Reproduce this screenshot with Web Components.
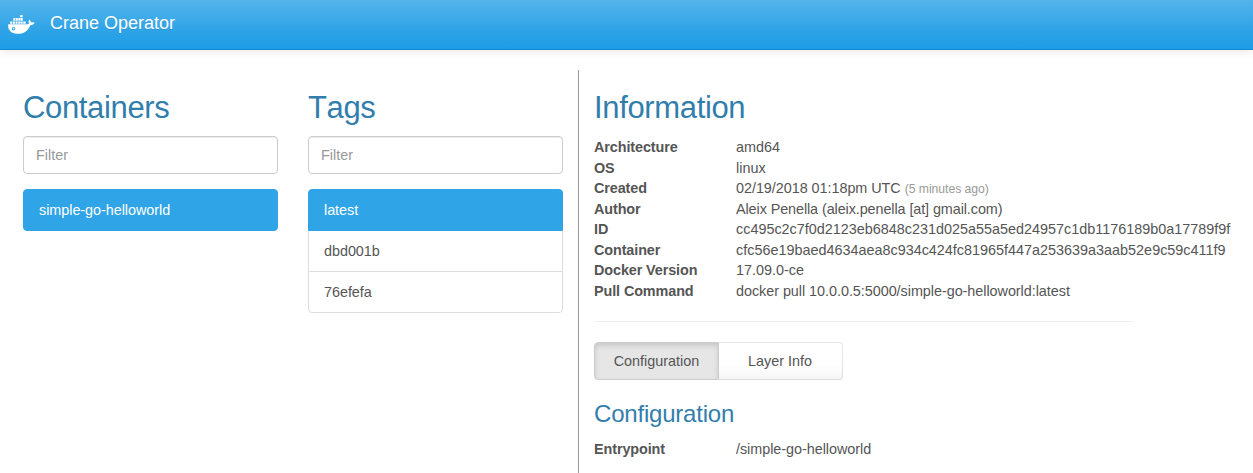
<!DOCTYPE html>
<html lang="en">
<head>
<meta charset="utf-8">
<title>Crane Operator</title>
<style>
html,body{margin:0;background:#fff;overflow:hidden}
body{font:14.4px/20.57px "Liberation Sans",Arial,sans-serif;color:#555;height:473px}
</style>
</head>
<body>
<crane-app></crane-app>
<script>
function define(name, html, setup) {
  const t = document.createElement('template');
  t.innerHTML = html;
  customElements.define(name, class extends HTMLElement {
    constructor() {
      super();
      this.attachShadow({mode: 'open'}).append(t.content.cloneNode(true));
    }
    connectedCallback() { if (setup) setup(this, this.shadowRoot); }
  });
}

define('docker-logo', `
<style>:host{display:block;width:28px;height:20px;margin-top:2px}svg{display:block}</style>
<svg width="28" height="20" viewBox="0 0 28 20" fill="#fff">
  <path d="M12.2 0h2.4v2.3h-2.4zM5.3 3.1h2v2.7h-2zM7.8 3.1h2v2.7h-2zM10.3 3.1h1.6v2.7h-1.6zM12.3 3.1h2.4v2.7h-2.4zM2.2 6.4h2.2v2.4h-2.2zM5 6.4h2v2.4H5zM7.6 6.4h2v2.4h-2zM10.2 6.4h1.8v2.4h-1.8zM12.5 6.4h2.1v2.4h-2.1zM15.2 6.4h2.5v2.4h-2.5z"/>
  <path fill-rule="evenodd" d="M.2 9.3h18.4c1.3 0 2.2-.4 2.6-.8-.9-1.2-.8-2.7.1-3.7 1.1.8 1.7 1.6 1.8 2.6 1.3-.3 2.6-.1 3.6.4-.7 1.7-2.3 2.4-4.4 2.4-2.1 5.3-5.9 8.6-11.9 8.600C3.700 18.800-.4 15.800.2 9.300zM5.600 12a1.700 1.700 0 1 0 .01 0z"/>
  <circle cx="5.7" cy="13.6" r=".8"/>
</svg>`);

define('nav-bar', `
<style>
:host{display:flex;align-items:center;box-sizing:border-box;height:50px;padding:0 8px 2px;background:linear-gradient(#54b4eb,#2fa4e7 60%,#1d9ce5);border-bottom:1px solid #178acc;box-shadow:0 1px 10px rgba(0,0,0,.1);color:#fff;font-size:18px;text-shadow:0 1px 0 rgba(0,0,0,.1)}
docker-logo{margin-right:14px}
</style><docker-logo></docker-logo><span><slot></slot></span>`);

define('section-title', `
<style>:host{display:block;color:#317eac;font-size:31px;line-height:34px;letter-spacing:-.35px;font-kerning:none;margin:21px 0 11px}:host([small]){font-size:24px;line-height:26px;letter-spacing:-.2px;margin:21px 0 12px}</style><slot></slot>`);

define('filter-box', `
<style>input{display:block;box-sizing:border-box;width:100%;height:38px;margin:0 0 15px;padding:8px 12px;border:1px solid #ccc;border-radius:4px;box-shadow:inset 0 1px 1px rgba(0,0,0,.075);font:inherit;color:#555;outline:0}input::placeholder{color:#999;opacity:1}:host{display:block}</style>
<input type="text" placeholder="Filter">`);

define('list-item', `
<style>:host{display:block;box-sizing:border-box;height:42px;padding:10px 15px;border:1px solid #ddd;margin-bottom:-1px;background:#fff;letter-spacing:-.04px}
:host(:first-of-type){border-radius:4px 4px 0 0}:host(:last-of-type){border-radius:0 0 4px 4px;margin:0}:host(:only-of-type){border-radius:4px}
:host([active]){background:#2fa4e7;border-color:#2fa4e7;color:#fff;position:relative}</style><slot></slot>`);

define('list-column', `
<style>:host{display:block;box-sizing:border-box;width:285px;padding:0 15px}</style>
<section-title></section-title><filter-box></filter-box><slot></slot>`,
(el, root) => root.querySelector('section-title').textContent = el.getAttribute('heading'));

define('info-row', `
<style>:host{display:grid;grid-template-columns:142px 1fr;height:20.57px;white-space:nowrap}b{font-weight:700;letter-spacing:-.1px}:host([snug]) span{letter-spacing:-.09px}:host([prose]) span{letter-spacing:-.04px}::slotted(small){font-size:12.2px;line-height:1;color:#999}</style>
<b></b><span><slot></slot></span>`,
(el, root) => root.querySelector('b').textContent = el.getAttribute('label'));

define('tab-group', `
<style>:host{display:flex;margin:20px 0 0}
button{box-sizing:border-box;width:125px;height:38px;padding:0;font:inherit;color:#555;border:1px solid rgba(0,0,0,.1);background:linear-gradient(#fff,#fff 60%,#f5f5f5) border-box}
button:first-of-type{border-radius:4px 0 0 4px;background:#e6e6e6;border-color:#ccc;box-shadow:inset 0 3px 5px rgba(0,0,0,.125)}
button:last-of-type{border-radius:0 4px 4px 0;border-left:0;width:124px;padding-right:1px}</style>
<button>Configuration</button><button>Layer Info</button>`);

define('info-panel', `
<style>:host{display:block;box-sizing:border-box;flex:1;min-width:0;padding:0 0 0 15px;border-left:1px solid #999}
dl{margin:0;padding-top:1px;height:164px}
hr{border:0;border-top:1px solid #eee;margin:20px 0 0;width:539px}</style>
<section-title>Information</section-title>
<dl>
<info-row label="Architecture">amd64</info-row>
<info-row label="OS">linux</info-row>
<info-row label="Created" prose>02/19/2018 01:18pm UTC <small>(5 minutes ago)</small></info-row>
<info-row label="Author" snug>Aleix Penella (aleix.penella [at] gmail.com)</info-row>
<info-row label="ID">cc495c2c7f0d2123eb6848c231d025a55a5ed24957c1db1176189b0a17789f9f</info-row>
<info-row label="Container">cfc56e19baed4634aea8c934c424fc81965f447a253639a3aab52e9c59c411f9</info-row>
<info-row label="Docker Version">17.09.0-ce</info-row>
<info-row label="Pull Command" prose>docker pull 10.0.0.5:5000/simple-go-helloworld:latest</info-row>
</dl>
<hr>
<tab-group></tab-group>
<section-title small>Configuration</section-title>
<info-row label="Entrypoint" prose>/simple-go-helloworld</info-row>`);

define('crane-app', `
<style>:host{display:flex;flex-direction:column;height:473px}main{display:flex;flex:1;margin-top:20px;padding-left:8px}</style>
<nav-bar>Crane Operator</nav-bar>
<main>
<list-column heading="Containers"><list-item active>simple-go-helloworld</list-item></list-column>
<list-column heading="Tags"><list-item active>latest</list-item><list-item>dbd001b</list-item><list-item>76efefa</list-item></list-column>
<info-panel></info-panel>
</main>`);
</script>
</body>
</html>
